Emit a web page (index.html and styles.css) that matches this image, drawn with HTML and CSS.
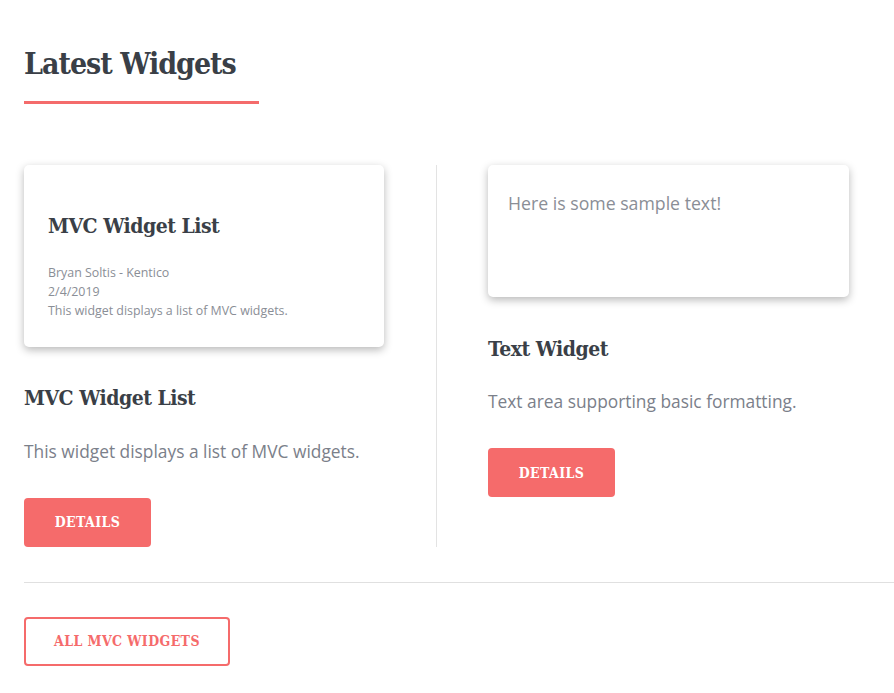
FILE: index.html
```html
<!DOCTYPE html>
<html lang="en">
<head>
<meta charset="utf-8">
<title>Latest Widgets</title>
<link rel="stylesheet" href="styles.css">
</head>
<body>
<main class="page">
  <h1 class="section-title">Latest Widgets</h1>
  <div class="widgets">
    <div class="widget-col widget-col--first">
      <div class="preview-card">
        <h3 class="preview-title">MVC Widget List</h3>
        <div class="meta">Bryan Soltis - Kentico</div>
        <div class="meta">2/4/2019</div>
        <div class="meta">This widget displays a list of MVC widgets.</div>
      </div>
      <h3 class="widget-title">MVC Widget List</h3>
      <p class="widget-desc">This widget displays a list of MVC widgets.</p>
      <a class="btn" href="#">Details</a>
    </div>
    <div class="widget-col widget-col--second">
      <div class="preview-card preview-card--text">
        <p class="sample-text">Here is some sample text!</p>
      </div>
      <h3 class="widget-title">Text Widget</h3>
      <p class="widget-desc">Text area supporting basic formatting.</p>
      <a class="btn" href="#">Details</a>
    </div>
  </div>
  <hr class="divider">
  <a class="btn-outline" href="#">All MVC Widgets</a>
</main>
</body>
</html>
```

FILE: styles.css
```css
html, body {
  margin: 0;
  padding: 0;
  background: #ffffff;
}

body {
  font-family: "Open Sans", "Liberation Sans", sans-serif;
  color: #3a3f47;
  overflow: hidden;
}

.page {
  padding: 46px 0 0 24px;
}

.section-title,
.preview-title,
.widget-title,
.btn,
.btn-outline {
  font-family: "DejaVu Serif Condensed", "DejaVu Serif", "Liberation Serif", serif;
  font-stretch: semi-condensed;
  font-weight: bold;
}

.section-title {
  margin: 0;
  font-size: 30px;
  line-height: 36px;
  letter-spacing: -1px;
  color: #3a3f47;
}

.section-title::after {
  content: "";
  display: block;
  width: 235px;
  height: 3px;
  margin-top: 19px;
  background: #f46b6b;
}

.widgets {
  display: flex;
  margin-top: 61px;
}

.widget-col {
  display: flex;
  flex-direction: column;
  align-items: flex-start;
}

.widget-col--first {
  width: 360px;
  padding-right: 52px;
  border-right: 1px solid #e3e3e3;
}

.widget-col--second {
  width: 361px;
  padding-left: 51px;
}

.preview-card {
  align-self: stretch;
  box-sizing: border-box;
  background: #fff;
  border-radius: 5px;
  box-shadow: 0 3px 8px rgba(0, 0, 0, 0.28);
  padding: 48px 24px 26px;
}

.preview-card--text {
  height: 132px;
  padding: 26px 20px 0;
}

.preview-title {
  margin: 0 0 23.5px;
  font-size: 21px;
  line-height: 26px;
  letter-spacing: -0.5px;
  color: #3a3f47;
}

.meta {
  font-size: 12.4px;
  line-height: 19.4px;
  color: #8a8e96;
}

.sample-text {
  margin: 0;
  font-size: 17.7px;
  line-height: 25.5px;
  color: #8a8e96;
}

.widget-title {
  margin: 38.5px 0 0;
  font-size: 21px;
  line-height: 26px;
  letter-spacing: -0.5px;
  color: #3a3f47;
}

.widget-desc {
  margin: 27.4px 0 0;
  font-size: 17.35px;
  line-height: 24px;
  color: #7b808a;
}

.btn {
  display: flex;
  align-items: center;
  justify-content: center;
  box-sizing: border-box;
  width: 127px;
  height: 49px;
  margin-top: 35.2px;
  border-radius: 4px;
  background: #f56b6b;
  color: #ffffff;
  text-decoration: none;
  text-transform: uppercase;
  font-size: 14px;
  letter-spacing: 0.4px;
}

.divider {
  margin: 35px 0 0;
  border: 0;
  height: 1px;
  background: #e0e0e0;
}

.btn-outline {
  display: flex;
  align-items: center;
  justify-content: center;
  box-sizing: border-box;
  width: 206px;
  height: 49px;
  margin-top: 34px;
  border: 2px solid #f56b6b;
  border-radius: 4px;
  color: #f56b6b;
  text-decoration: none;
  text-transform: uppercase;
  font-size: 14px;
  letter-spacing: 0.4px;
}
```
